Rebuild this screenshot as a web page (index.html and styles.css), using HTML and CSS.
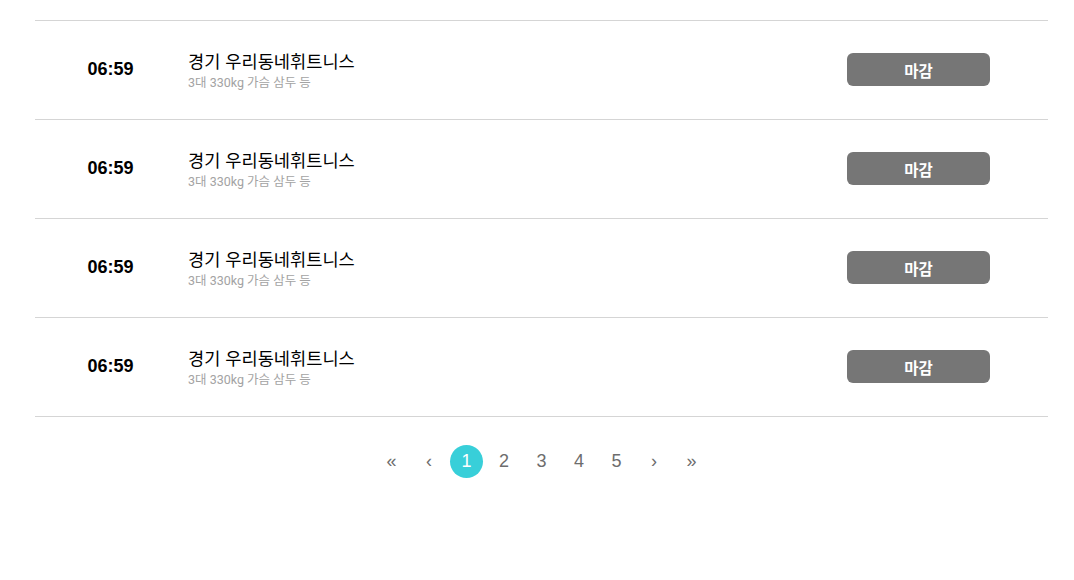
FILE: index.html
```html
<!DOCTYPE html>
<html lang="ko">
<head>
<meta charset="utf-8">
<link rel="stylesheet" href="styles.css">
</head>
<body>
<div class="wrap">
  <ul class="list">
    <li class="row">
      <div class="time">06:59</div>
      <div class="info">
        <div class="title">경기 우리동네휘트니스</div>
        <div class="sub">3대 330kg 가슴 삼두 등</div>
      </div>
      <div class="btn">마감</div>
    </li>
    <li class="row">
      <div class="time">06:59</div>
      <div class="info">
        <div class="title">경기 우리동네휘트니스</div>
        <div class="sub">3대 330kg 가슴 삼두 등</div>
      </div>
      <div class="btn">마감</div>
    </li>
    <li class="row">
      <div class="time">06:59</div>
      <div class="info">
        <div class="title">경기 우리동네휘트니스</div>
        <div class="sub">3대 330kg 가슴 삼두 등</div>
      </div>
      <div class="btn">마감</div>
    </li>
    <li class="row">
      <div class="time">06:59</div>
      <div class="info">
        <div class="title">경기 우리동네휘트니스</div>
        <div class="sub">3대 330kg 가슴 삼두 등</div>
      </div>
      <div class="btn">마감</div>
    </li>
  </ul>
  <nav class="pager">
    <span class="pg">«</span>
    <span class="pg">‹</span>
    <span class="pg active">1</span>
    <span class="pg">2</span>
    <span class="pg">3</span>
    <span class="pg">4</span>
    <span class="pg">5</span>
    <span class="pg">›</span>
    <span class="pg">»</span>
  </nav>
</div>
</body>
</html>
```
FILE: styles.css
```css
html, body {
  margin: 0;
  padding: 0;
  background: #fff;
}
body {
  font-family: "Liberation Sans", "Noto Sans CJK KR", sans-serif;
  color: #000;
}
.wrap {
  margin-left: 35px;
  width: 1013px;
  padding-top: 20px;
}
.list {
  list-style: none;
  margin: 0;
  padding: 0;
  border-top: 1px solid #d5d5d5;
}
.row {
  display: flex;
  align-items: center;
  height: 97px;
  padding-bottom: 1px;
  border-bottom: 1px solid #d5d5d5;
}
.time {
  width: 151px;
  text-align: center;
  font-size: 18px;
  font-weight: bold;
}
.info {
  flex: 1;
  padding-left: 2px;
  padding-top: 3px;
}
.title {
  font-size: 17.6px;
  line-height: 22px;
  font-family: "Noto Sans CJK KR", sans-serif;
}
.sub {
  margin-top: 2px;
  font-size: 12.5px;
  line-height: 18px;
  color: #a3a3a3;
  font-family: "Roboto", "Noto Sans CJK KR", sans-serif;
}
.btn {
  width: 143px;
  height: 33px;
  margin-right: 58px;
  background: #767676;
  border-radius: 6px;
  color: #fff;
  font-weight: bold;
  font-size: 15.5px;
  display: flex;
  align-items: center;
  justify-content: center;
  font-family: "Noto Sans CJK KR", sans-serif;
}
.pager {
  display: flex;
  justify-content: center;
  align-items: center;
  margin-top: 28px;
  gap: 4.5px;
}
.pg {
  width: 33px;
  height: 33px;
  display: flex;
  align-items: center;
  justify-content: center;
  font-size: 18px;
  color: #6d6d6d;
  border-radius: 50%;
}
.pg.active {
  background: #38cfd9;
  color: #fff;
}
```
